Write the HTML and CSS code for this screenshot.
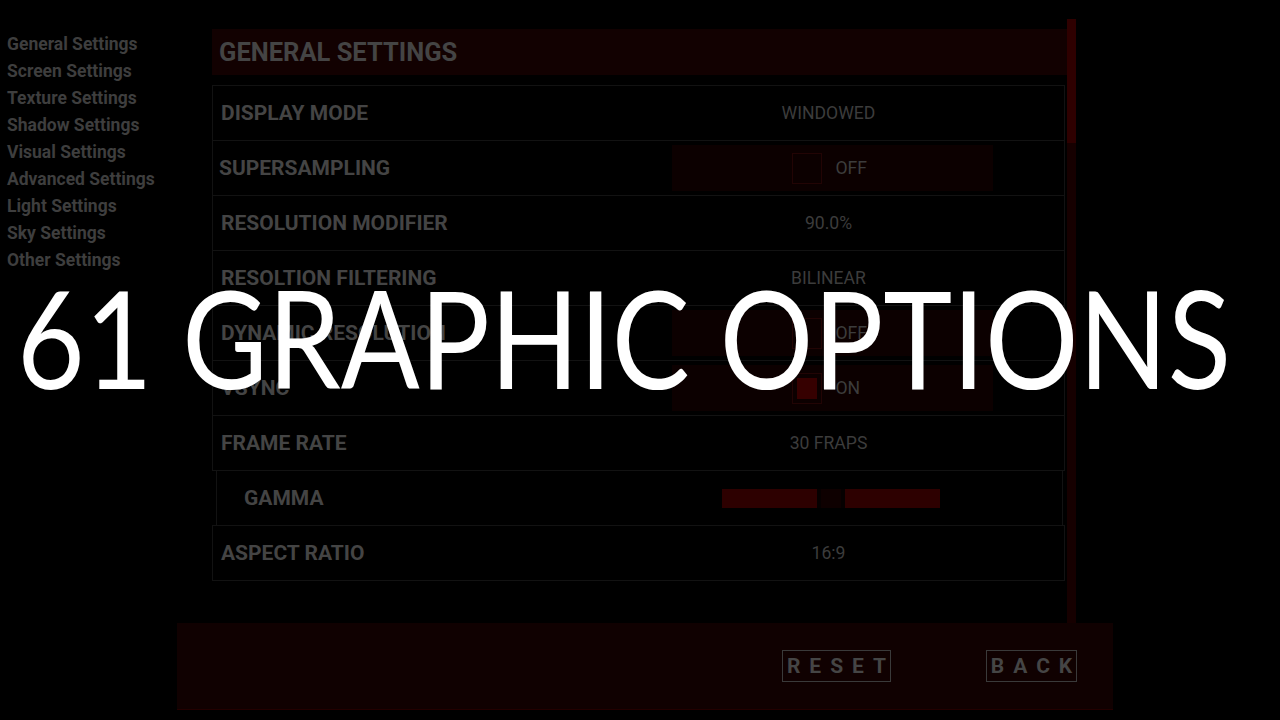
FILE: index.html
```html
<!DOCTYPE html>
<html>
<head>
<meta charset="utf-8">
<link rel="stylesheet" href="styles.css">
</head>
<body>
<div class="screen">
  <div class="top">
    <nav class="sidebar">
      <div class="nav-item">General Settings</div>
      <div class="nav-item">Screen Settings</div>
      <div class="nav-item">Texture Settings</div>
      <div class="nav-item">Shadow Settings</div>
      <div class="nav-item">Visual Settings</div>
      <div class="nav-item">Advanced Settings</div>
      <div class="nav-item">Light Settings</div>
      <div class="nav-item">Sky Settings</div>
      <div class="nav-item">Other Settings</div>
    </nav>
    <main class="panel">
      <div class="panel-header">GENERAL SETTINGS</div>
      <div class="rows">
        <div class="row"><div class="label">DISPLAY MODE</div><div class="value">WINDOWED</div></div>
        <div class="row"><div class="label label-tight">SUPERSAMPLING</div><div class="toggle"><span class="check"></span><span class="toggle-text">OFF</span></div></div>
        <div class="row"><div class="label">RESOLUTION MODIFIER</div><div class="value">90.0%</div></div>
        <div class="row"><div class="label">RESOLTION FILTERING</div><div class="value">BILINEAR</div></div>
        <div class="row"><div class="label">DYNAMIC RESOLUTION</div><div class="toggle"><span class="check"></span><span class="toggle-text">OFF</span></div></div>
        <div class="row"><div class="label">VSYNC</div><div class="toggle"><span class="check check-on"></span><span class="toggle-text">ON</span></div></div>
        <div class="row"><div class="label">FRAME RATE</div><div class="value">30 FRAPS</div></div>
        <div class="row row-gamma"><div class="label label-gamma">GAMMA</div><div class="slider"><span class="bar"></span><span class="handle"></span><span class="bar"></span></div></div>
        <div class="row"><div class="label">ASPECT RATIO</div><div class="value">16:9</div></div>
      </div>
    </main>
    <div class="scrollbar"><div class="thumb"></div></div>
  </div>
  <div class="bottom">
    <div class="btn btn-reset">RESET</div>
    <div class="btn btn-back">BACK</div>
  </div>
  <div class="overlay-title">61 GRAPHIC OPTIONS</div>
</div>
</body>
</html>
```
FILE: styles.css
```css
html, body {
  margin: 0;
  padding: 0;
  background: #000;
}
.screen {
  position: relative;
  width: 1280px;
  height: 720px;
  overflow: hidden;
  background: #000;
  font-family: Roboto, "Liberation Sans", sans-serif;
}
.top {
  display: flex;
  height: 623px;
}
.sidebar {
  width: 211px;
  box-sizing: border-box;
  padding: 31px 0 0 7px;
}
.nav-item {
  font-size: 17.5px;
  font-weight: 700;
  line-height: 27px;
  color: #3e3e3e;
  white-space: nowrap;
}
.panel {
  width: 856px;
  padding-top: 29px;
}
.panel-header {
  height: 46px;
  background: #120101;
  color: #444;
  font-size: 25.5px;
  font-weight: 700;
  line-height: 46px;
  padding-left: 7px;
  margin-left: 1px;
}
.rows {
  margin-top: 11px;
  margin-left: 1px;
  width: 853px;
}
.row {
  box-sizing: border-box;
  height: 56px;
  margin-top: -1px;
  border: 1px solid #121212;
  display: grid;
  grid-template-columns: 459px 321px 1fr;
  align-items: center;
}
.label {
  padding-left: 8px;
  font-size: 21px;
  font-weight: 700;
  color: #444;
  white-space: nowrap;
}
.label-tight {
  padding-left: 6px;
}
.row-gamma {
  margin-left: 4px;
  margin-right: 2px;
  grid-template-columns: 453px 321px 1fr;
}
.label-gamma {
  padding-left: 27px;
}
.value {
  text-align: center;
  font-size: 17.6px;
  color: #3c3c3c;
  padding-right: 8px;
}
.toggle {
  height: 46px;
  background: #0c0000;
  display: flex;
  align-items: center;
  justify-content: center;
  gap: 14px;
  padding-right: 6px;
}
.check {
  width: 28px;
  height: 29px;
  border: 1px solid #220404;
  box-sizing: content-box;
  position: relative;
}
.check-on::after {
  content: "";
  position: absolute;
  left: 4px;
  top: 4px;
  width: 20px;
  height: 21px;
  background: #360000;
}
.toggle-text {
  font-size: 17.6px;
  color: #3c3c3c;
  width: 32px;
}
.slider {
  display: flex;
  align-items: center;
  justify-content: center;
  height: 19px;
}
.bar {
  width: 95px;
  height: 19px;
  background: #2d0000;
}
.handle {
  width: 28px;
  height: 19px;
  background: #0e0000;
  box-shadow: inset 4px 0 0 #060000, inset -4px 0 0 #060000;
}
.scrollbar {
  width: 9px;
  margin-top: 19px;
  height: 604px;
  background: #160000;
}
.thumb {
  height: 124px;
  background: #2e0000;
}
.bottom {
  margin-left: 177px;
  width: 936px;
  height: 86px;
  box-sizing: content-box;
  background: #100101;
  border-bottom: 1px solid #230000;
  display: flex;
  justify-content: flex-end;
  align-items: center;
}
.btn {
  box-sizing: border-box;
  height: 32px;
  border: 1px solid #3a3a3a;
  color: #454545;
  font-size: 21px;
  font-weight: 700;
  line-height: 30px;
  letter-spacing: 9px;
  display: flex;
  align-items: center;
  justify-content: center;
  padding-left: 9px;
}
.btn-reset {
  width: 109px;
  margin-right: 95px;
}
.btn-back {
  width: 91px;
  margin-right: 36px;
}
.overlay-title {
  position: absolute;
  left: 17px;
  top: 270px;
  font-family: Lato, "Open Sans", sans-serif;
  font-size: 135px;
  line-height: 135px;
  color: #fff;
  white-space: nowrap;
  transform: scaleX(0.865);
  transform-origin: left top;
}
```
